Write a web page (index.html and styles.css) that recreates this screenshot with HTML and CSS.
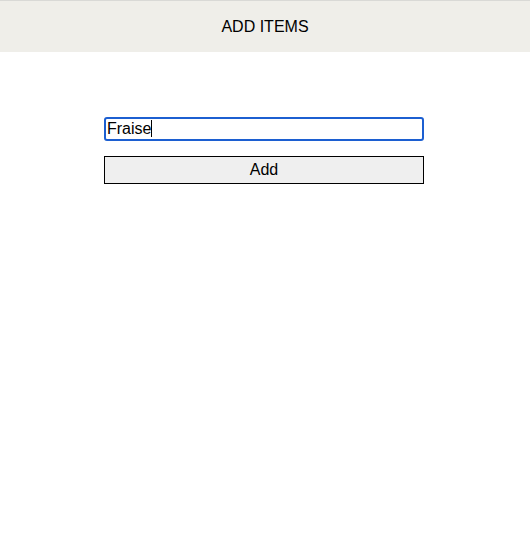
FILE: index.html
```html
<!DOCTYPE html>
<html>
<head>
<meta charset="utf-8">
<link rel="stylesheet" href="styles.css">
</head>
<body>
<header class="topbar">ADD ITEMS</header>
<main class="form">
  <div class="field-wrap">
    <input class="field" type="text" value="Fraise">
    <span class="caret"></span>
  </div>
  <button class="add-btn" type="button">Add</button>
</main>
</body>
</html>
```
FILE: styles.css
```css
html, body {
  margin: 0;
  padding: 0;
  background: #ffffff;
  font-family: "Liberation Sans", Arial, sans-serif;
  color: #000;
}
.topbar {
  box-sizing: border-box;
  height: 52px;
  border-top: 1px solid #d9d9d6;
  background: #efeee9;
  display: flex;
  align-items: center;
  justify-content: center;
  font-size: 16px;
}
.form {
  width: 320px;
  margin: 65px auto 0 auto;
  display: flex;
  flex-direction: column;
  gap: 15px;
  transform: translateX(-1px);
}
.field-wrap {
  position: relative;
  height: 24px;
}
.field {
  box-sizing: border-box;
  width: 320px;
  height: 24px;
  border: 2px solid #1c5fd1;
  border-radius: 3px;
  padding: 0 1px;
  font-family: "Liberation Sans", Arial, sans-serif;
  font-size: 16px;
  color: #000;
  outline: none;
}
.caret {
  position: absolute;
  left: 47px;
  top: 3px;
  width: 1px;
  height: 17px;
  background: #000;
}
.add-btn {
  box-sizing: border-box;
  width: 320px;
  height: 28px;
  border: 1px solid #000;
  border-radius: 0;
  background: #efefef;
  font-family: "Liberation Sans", Arial, sans-serif;
  font-size: 16px;
  color: #000;
  padding: 0;
}
```
